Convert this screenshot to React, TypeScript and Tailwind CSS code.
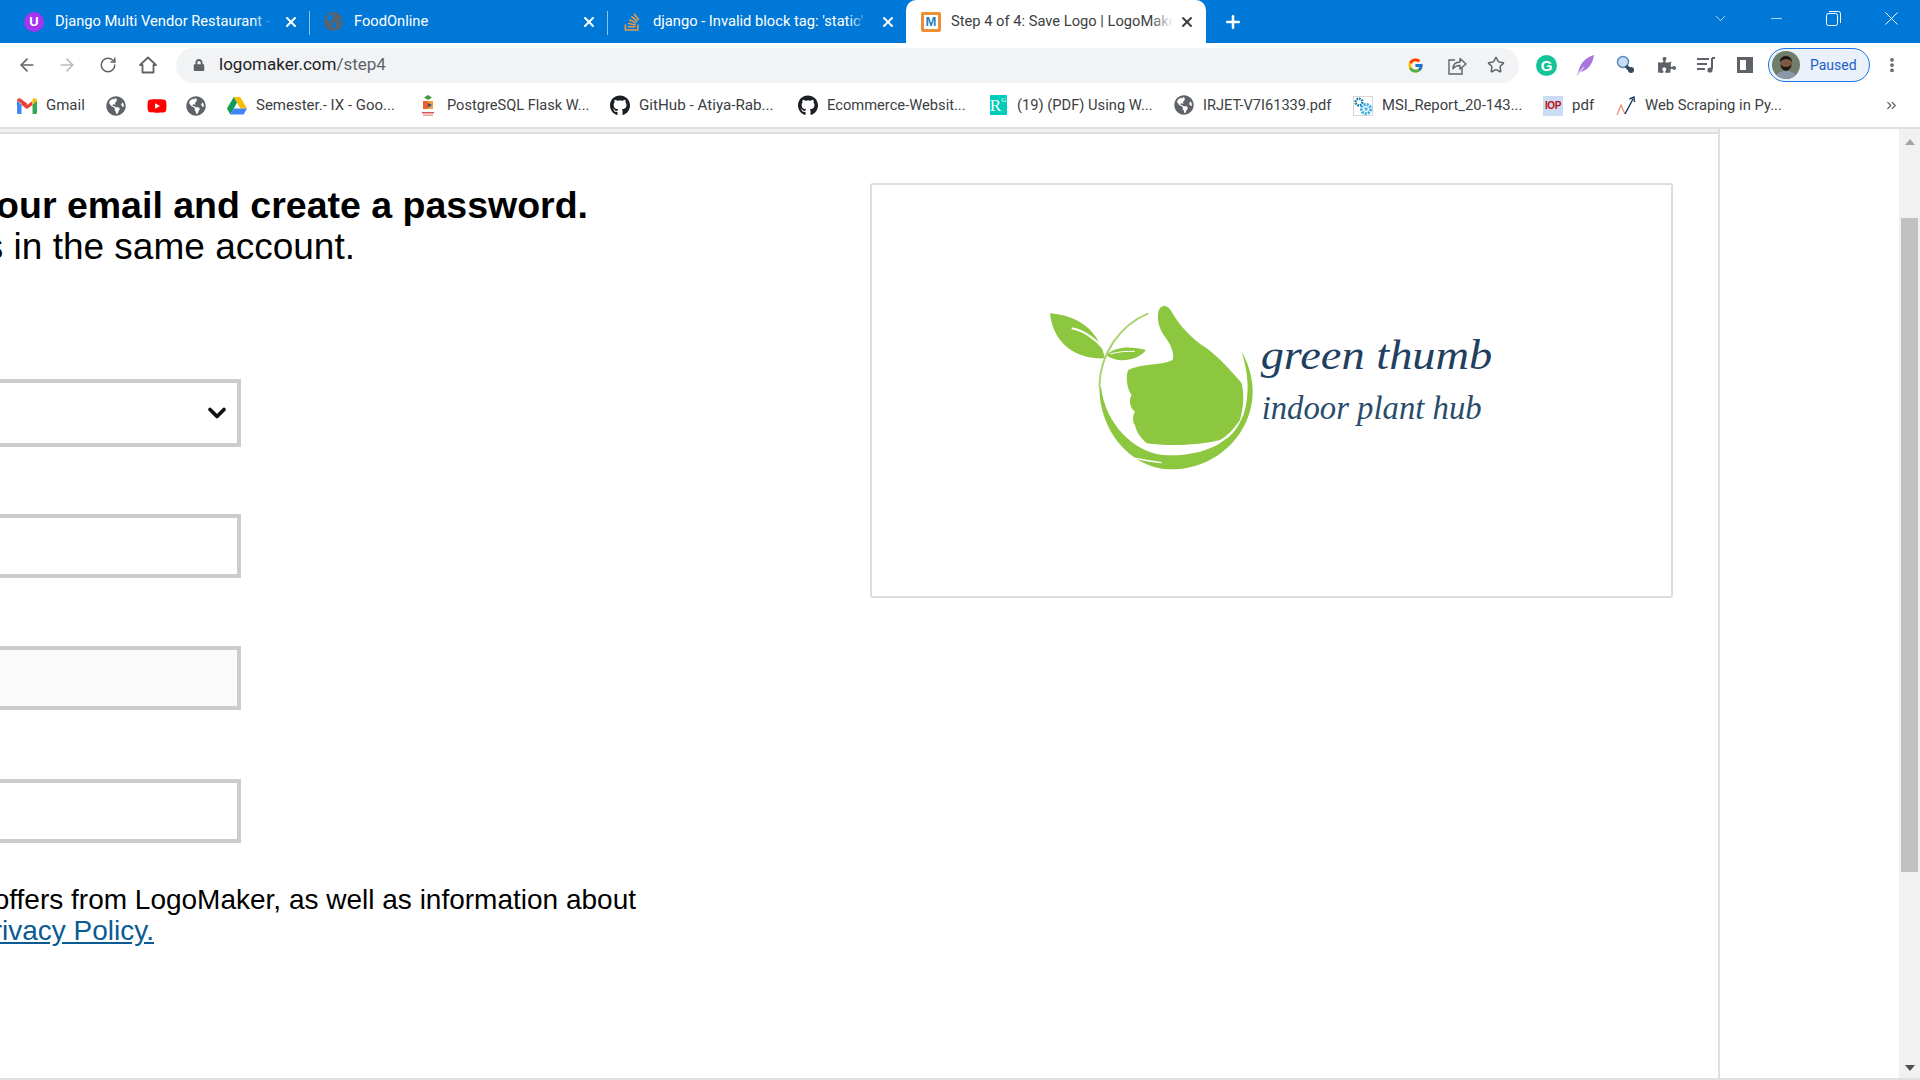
import React from "react";
import { FaGithub, FaGlobeAmericas, FaLock, FaPuzzlePiece, FaStackOverflow, FaYoutube } from "react-icons/fa";
import { FcGoogle } from "react-icons/fc";
import { ArrowLeft, ArrowRight, RotateCw, Star, X, Plus, ChevronDown, Minus, ChevronsRight, MoreVertical } from "lucide-react";

const Globe = ({ size = 20 }: { size?: number }) => <FaGlobeAmericas size={size} color="#5f6368" />;
const GitHub = () => <FaGithub size={21} color="#1b1f23" />;

const Gmail = () => (
  <svg width="20" height="16" viewBox="0 0 20 16">
    <path d="M0 2.5 V14.5 A1.5 1.5 0 0 0 1.5 16 H4.5 V6.5Z" fill="#4285f4" />
    <path d="M20 2.5 V14.5 A1.5 1.5 0 0 1 18.5 16 H15.5 V6.5Z" fill="#34a853" />
    <path d="M0 2.5 C0 .5 2 -.5 3.5 .6 L10 5.5 L10 9.5 L0 2.5Z" fill="#ea4335" />
    <path d="M4.5 3 L10 7 L15.5 3 V7 L10 11 L4.5 7Z" fill="#ea4335" />
    <path d="M20 2.5 C20 .5 18 -.5 16.5 .6 L15.5 1.4 V6.5Z" fill="#fbbc04" />
  </svg>
);

const Drive = () => (
  <svg width="20" height="18" viewBox="0 0 20 18">
    <path d="M6.7 0 H13.3 L20 11.6 H13.4Z" fill="#fbbc04" />
    <path d="M6.7 0 L0 11.6 L3.3 17.4 L10 5.8Z" fill="#0f9d58" />
    <path d="M3.3 17.4 H16.7 L20 11.6 H6.6Z" fill="#4285f4" />
  </svg>
);

const Postgres = () => (
  <svg width="14" height="22" viewBox="0 0 14 22">
    <path d="M7 0 L11 2.5 L7 5 L3 2.5Z" fill="#3f9d3f" />
    <path d="M2 6 H7 V14 H2Z" fill="#e8632b" />
    <path d="M7 6 H12 L12 14 H7Z" fill="#f29b38" />
    <path d="M7 8 L11 10 L7 12.5Z" fill="#334a8e" />
    <rect x="1" y="17" width="12" height="1.5" fill="#d9534f" />
    <rect x="2" y="19.5" width="10" height="1.5" fill="#e3a59a" />
  </svg>
);

const Msi = () => (
  <svg width="20" height="20" viewBox="0 0 20 20">
    <rect x=".5" y=".5" width="19" height="19" fill="#fff" stroke="#d5d5d5" />
    <circle cx="6" cy="6" r="3.4" fill="none" stroke="#1780a8" strokeWidth="2.4" strokeDasharray="1.8 .8" />
    <circle cx="13" cy="13" r="4.6" fill="none" stroke="#46b1e4" strokeWidth="3" strokeDasharray="2.2 .9" />
    <rect x="11.5" y="11.5" width="3" height="3" fill="#46b1e4" />
  </svg>
);

const Trend = () => (
  <svg width="20" height="20" viewBox="0 0 20 20" fill="none">
    <path d="M1 19 L5 9 L9 18" stroke="#e8846c" strokeWidth="1.1" />
    <path d="M9 18 L17 3" stroke="#14395e" strokeWidth="1.4" />
    <path d="M13.5 3 L18 1 L18.5 6" stroke="#14395e" strokeWidth="1.4" />
  </svg>
);

const Rg = () => (
  <span className="flex h-[20px] w-[17px] items-start justify-center rounded-[1px] bg-[#00ccbb] font-['Liberation_Serif',serif] text-[17px] leading-[21px] text-white">
    R<span className="text-[7px] leading-[10px]">G</span>
  </span>
);

const Iop = () => (
  <span className="flex h-[20px] w-[20px] items-center justify-center bg-[#ccdcf6] font-['Liberation_Sans',sans-serif] text-[10px] font-bold leading-none tracking-[-0.4px] text-[#bb1111]">
    IOP
  </span>
);

const LogoMakerIcon = () => (
  <span className="flex h-[20px] w-[20px] items-center justify-center rounded-[2px] border-[3px] border-[#ef8f34] bg-white font-['Liberation_Sans',sans-serif] text-[13px] font-bold leading-none text-[#1f7fc4]">
    M
  </span>
);

const UdemyIcon = () => (
  <span className="flex h-[20px] w-[20px] items-center justify-center rounded-full bg-[#a435f0] font-['Liberation_Sans',sans-serif] text-[13px] font-bold leading-none text-white">
    U
  </span>
);

const tabs = [
  { icon: <UdemyIcon />, title: "Django Multi Vendor Restaurant - Udemy", cls: "w-[298px] pl-[12px] pr-[11px]", sep: true, box: "w-[218px]", fade: true },
  { icon: <Globe size={19} />, title: "FoodOnline", cls: "w-[298px] pl-[13px] pr-[11px]", sep: true, box: "w-[228px]", fade: false },
  { icon: <FaStackOverflow size={20} color="#e89a4f" />, title: "django - Invalid block tag: 'static'", cls: "w-[298px] pl-[14px] pr-[10px]", sep: false, box: "w-[216px]", fade: true },
];

const bookmarks: { icon: React.ReactNode; text?: string; cls: string; size: string }[] = [
  { icon: <Gmail />, text: "Gmail", cls: "w-[89px]", size: "text-[15px]" },
  { icon: <Globe />, cls: "w-[41px]", size: "" },
  { icon: <FaYoutube size={22} color="#ff0000" />, cls: "w-[39px]", size: "" },
  { icon: <Globe />, cls: "w-[41px]", size: "" },
  { icon: <Drive />, text: "Semester.- IX - Goo...", cls: "w-[191px]", size: "text-[15px]" },
  { icon: <Postgres />, text: "PostgreSQL Flask W...", cls: "w-[192px]", size: "text-[14.6px]" },
  { icon: <GitHub />, text: "GitHub - Atiya-Rab...", cls: "w-[188px]", size: "text-[15.2px]" },
  { icon: <GitHub />, text: "Ecommerce-Websit...", cls: "w-[190px]", size: "text-[14.7px]" },
  { icon: <Rg />, text: "(19) (PDF) Using W...", cls: "w-[186px]", size: "text-[14.7px]" },
  { icon: <Globe />, text: "IRJET-V7I61339.pdf", cls: "w-[179px]", size: "text-[14.6px]" },
  { icon: <Msi />, text: "MSI_Report_20-143...", cls: "w-[190px]", size: "text-[14.8px]" },
  { icon: <Iop />, text: "pdf", cls: "w-[73px]", size: "text-[15px]" },
  { icon: <Trend />, text: "Web Scraping in Py...", cls: "w-[170px]", size: "text-[14.8px]" },
];

const Avatar = () => (
  <svg width="28" height="28" viewBox="0 0 28 28" className="rounded-full">
    <rect width="28" height="28" fill="#6f7d6a" />
    <path d="M3 28 C4 21 10 20 14 20 C19 20 24 21 25 28Z" fill="#8a97a8" />
    <ellipse cx="14" cy="12" rx="6" ry="7.5" fill="#7a5a45" />
    <path d="M8 11 C7 4 20 3 20 11 C18 7 11 7 8 11Z" fill="#17130f" />
    <path d="M8.5 13 C9 22 19 22 19.5 13 C18 17 10 17 8.5 13Z" fill="#211812" />
  </svg>
);

const Logo = () => (
  <svg width="490" height="200" viewBox="0 0 1470 600">
    <g fill="#8dc63f">
      <path d="M90 100 C150 105 230 130 255 235 C180 240 100 200 90 100Z" />
      <path d="M258 225 C290 195 340 200 378 210 C350 245 290 250 258 225Z" />
      <path d="M415 95 C420 75 440 70 455 95 C480 140 520 180 560 205 C600 235 640 280 665 310 C675 350 668 390 660 420 C640 450 620 470 600 480 C540 495 450 500 380 490 C365 475 350 460 345 435 C335 425 340 400 345 395 C330 385 325 360 335 345 C322 330 315 290 325 270 C360 250 420 258 458 240 C465 220 450 190 435 170 C420 150 410 125 415 95Z" />
      <path d="M238 320 C238 460 340 568 455 568 C590 568 700 460 698 330 C697 290 685 250 665 215 C685 280 690 340 672 400 C650 455 630 470 610 482 C570 515 490 530 430 525 C340 515 255 430 243 320Z" />
    </g>
    <path d="M335 533 C365 538 395 545 425 548" fill="none" stroke="#fff" strokeWidth="4" />
    <path d="M385 100 C300 135 240 220 238 320" fill="none" stroke="#a9d470" strokeWidth="6" />
    <path d="M155 145 C190 150 230 180 250 205" fill="none" stroke="#fff" strokeWidth="6" />
    <path d="M270 222 C295 215 320 213 345 214" fill="none" stroke="#fff" strokeWidth="3" />
    <text x="722" y="268" fontFamily="'Liberation Serif', serif" fontStyle="italic" fontSize="128" fill="#1f4060" textLength="695" lengthAdjust="spacingAndGlyphs">green thumb</text>
    <text x="725" y="418" fontFamily="'Liberation Serif', serif" fontStyle="italic" fontSize="100" fill="#2a4c6c" textLength="660" lengthAdjust="spacingAndGlyphs">indoor plant hub</text>
  </svg>
);

const tabFont = "font-['Roboto',sans-serif] text-[14.7px] leading-[20px]";

export default function App() {
  return (
    <div className="flex h-[1080px] w-[1920px] flex-col overflow-hidden bg-white font-['Liberation_Sans',sans-serif]">
      {/* Tab strip */}
      <div className="flex h-[43px] shrink-0 items-center bg-[#0078d7]">
        <div className="w-[12px] shrink-0" />
        <div className="flex h-[43px]">
          {tabs.map((t) => (
            <div key={t.title} className={`relative flex items-center ${t.cls} text-white`}>
              <span className="flex w-[20px] shrink-0 justify-center">{t.icon}</span>
              <span className="relative ml-[11px] flex-1 overflow-hidden">
                <span className={`relative block ${t.box} overflow-hidden whitespace-nowrap pb-[2px] ${tabFont}`}>
                  {t.title}
                  {t.fade && <span className="absolute right-0 top-0 h-full w-[20px] bg-gradient-to-r from-[#0078d7]/0 to-[#0078d7]" />}
                </span>
              </span>
              <X size={16} strokeWidth={3} className="ml-[6px] shrink-0" />
              {t.sep && <span className="absolute right-0 top-[11px] h-[24px] w-[1px] bg-[#8cc2ec]" />}
            </div>
          ))}
        </div>
        <div className="flex h-[43px] w-[300px] shrink-0 items-center self-end rounded-t-[10px] bg-white pl-[15px] pr-[11px] text-[#3c4043]">
          <LogoMakerIcon />
          <span className="relative ml-[10px] flex-1 overflow-hidden">
            <span className={`block overflow-hidden whitespace-nowrap pb-[2px] ${tabFont}`}>Step 4 of 4: Save Logo | LogoMaker</span>
            <span className="absolute right-0 top-0 h-full w-[22px] bg-gradient-to-r from-white/0 to-white" />
          </span>
          <X size={16} strokeWidth={3} className="ml-[6px] shrink-0 text-[#3c4043]" />
        </div>
        <Plus size={20} strokeWidth={3} className="ml-[17px] text-white" />
        <div className="flex-1" />
        <div className="flex items-center pb-[6px]">
          <ChevronDown size={17} strokeWidth={1} className="mr-[39px] text-white" />
          <Minus size={17} strokeWidth={1} className="mr-[41px] text-white" />
          <svg width="15" height="15" viewBox="0 0 15 15" fill="none" stroke="#fff" className="mr-[39px]">
            <rect x=".5" y="2.5" width="11" height="12" rx="2" />
            <path d="M3 .5 H12.5 A2 2 0 0 1 14.5 2.5 V12" />
          </svg>
          <X size={23} strokeWidth={1} className="mr-[17px] text-white" />
        </div>
      </div>

      {/* Toolbar */}
      <div className="flex h-[41px] shrink-0 items-center bg-white pt-[3px] text-[#5f6368]">
        <ArrowLeft size={20} className="ml-[17px]" strokeWidth={2} />
        <ArrowRight size={20} className="ml-[20px] text-[#b9bbbe]" strokeWidth={2} />
        <RotateCw size={18} className="ml-[22px]" strokeWidth={2} />
        <svg width="20" height="20" viewBox="0 0 20 20" fill="none" stroke="#5f6368" strokeWidth="1.8" className="ml-[21px]">
          <path d="M10 2.5 L2 10 H4.5 V17.5 H15.5 V10 H18Z" strokeLinejoin="round" />
        </svg>
        <div className="ml-[18px] flex h-[35px] w-[1343px] items-center rounded-full bg-[#f1f3f4] pl-[17px] pr-[11px]">
          <FaLock size={12} />
          <span className="ml-[14px] flex-1 font-['Roboto',sans-serif] text-[17px] text-[#202124]">
            logomaker.com<span className="text-[#5f6368]">/step4</span>
          </span>
          <FcGoogle size={17} className="mr-[23px]" />
          <svg width="20" height="19" viewBox="0 0 20 19" fill="none" stroke="#5f6368" strokeWidth="1.4" className="mr-[20px]">
            <path d="M8 4 H2 V18 H15 V12" />
            <path d="M6 13 C6 8 9 6 13 6 V2.5 L19 8 L13 13 V9.5 C10 9.5 7.5 10.5 6 13Z" strokeLinejoin="round" />
          </svg>
          <Star size={18} className="mr-[3px]" strokeWidth={2} />
        </div>
        <span className="ml-[17px] flex h-[21px] w-[21px] items-center justify-center rounded-full bg-[#15c39a] text-[15px] font-bold leading-none text-white">G</span>
        <svg width="20" height="22" viewBox="0 0 20 22" className="ml-[19px]">
          <path d="M2 20 C3 10 10 3 18 1 C17 9 12 17 4 18Z" fill="#a974dc" />
          <path d="M1 21 L8 13" stroke="#dcc6f1" strokeWidth="1.5" />
        </svg>
        <svg width="20" height="20" viewBox="0 0 20 20" className="ml-[20px]">
          <circle cx="7" cy="7" r="5.5" fill="#c6ddf3" stroke="#5a8cbd" strokeWidth="1.5" />
          <path d="M10 11 L15 16" stroke="#34495e" strokeWidth="3.5" />
          <circle cx="15" cy="15" r="3" fill="#34495e" />
        </svg>
        <FaPuzzlePiece size={18} className="ml-[22px]" />
        <svg width="18" height="16" viewBox="0 0 18 16" fill="none" stroke="#5f6368" strokeWidth="2" className="ml-[21px]">
          <path d="M0 2 H12 M0 7 H10 M0 12 H8" />
          <path d="M15 1 V12" />
          <circle cx="13" cy="13" r="1.6" fill="#5f6368" />
          <path d="M15 1 H18" />
        </svg>
        <span className="ml-[22px] h-[16px] w-[16px] border-[3px] border-r-[7px] border-[#5f6368] bg-white" />
        <div className="ml-[15px] flex h-[34px] w-[102px] items-center rounded-full border border-[#1a73e8] bg-[#eaf1fb] pl-[3px]">
          <Avatar />
          <span className="ml-[10px] font-['Roboto',sans-serif] text-[14px] text-[#1a5fc7]">Paused</span>
        </div>
        <MoreVertical size={18} strokeWidth={3} className="ml-[13px]" />
      </div>

      {/* Bookmarks */}
      <div className="flex h-[45px] shrink-0 items-center border-b-2 border-[#e0e0e0] bg-white pl-[17px]">
        {bookmarks.map((b, i) => (
          <div key={i} className={`flex shrink-0 items-center ${b.cls}`}>
            <span className="flex w-[20px] shrink-0 justify-center">{b.icon}</span>
            {b.text && <span className={`ml-[9px] whitespace-nowrap font-['Roboto',sans-serif] text-[#3c4043] ${b.size}`}>{b.text}</span>}
          </div>
        ))}
        <div className="flex-1" />
        <ChevronsRight size={15} className="mr-[21px] text-[#5f6368]" strokeWidth={2} />
      </div>

      {/* Page */}
      <div className="flex min-h-0 flex-1 border-b-2 border-[#e0e0e0]">
        <div className="flex w-[1899px] shrink-0">
          <div className="flex w-[1720px] shrink-0 flex-col border-r-2 border-[#e0e0e0]">
            <div className="h-[5px] shrink-0 border-b-2 border-[#e0e0e0] bg-[#f2f2f2]" />
            <div className="flex min-h-0 flex-1">
              <div className="w-[870px] shrink-0 overflow-hidden text-black">
                <div className="mt-[50px] flex w-[588px] justify-end whitespace-nowrap text-[37.5px] font-bold leading-[42px]">Enter your email and create a password.</div>
                <div className="flex w-[355px] justify-end whitespace-nowrap text-[37px] leading-[42px]">You can save all your logos in the same account.</div>
                <div className="mt-[111px] flex h-[68px] w-[241px] items-center justify-end border-y-4 border-r-4 border-[#cccccc] pr-[6px]">
                  <ChevronDown size={28} strokeWidth={3.2} className="text-[#111]" />
                </div>
                <div className="mt-[67px] h-[64px] w-[241px] border-y-4 border-r-4 border-[#cccccc]" />
                <div className="mt-[68px] h-[64px] w-[241px] border-y-4 border-r-4 border-[#cccccc] bg-[#fafafa]" />
                <div className="mt-[69px] h-[64px] w-[241px] border-y-4 border-r-4 border-[#cccccc]" />
                <div className="mt-[41px] flex w-[636px] justify-end whitespace-nowrap text-[28px] leading-[31px]">Sign up to receive emails and special offers from LogoMaker, as well as information about</div>
                <div className="flex w-[154px] justify-end whitespace-nowrap text-[28px] leading-[31px]">
                  <span>and&nbsp;</span>
                  <a className="text-[#0a5a94] underline">our Privacy Policy.</a>
                </div>
              </div>
              <div className="mt-[49px] h-[415px] w-[803px] shrink-0 rounded-[3px] border-2 border-[#dddddd] pl-[148px] pt-[95px]">
                <Logo />
              </div>
            </div>
          </div>
        </div>
        <div className="flex w-[21px] shrink-0 flex-col items-center bg-[#f1f1f1]">
          <svg width="10" height="6" viewBox="0 0 10 6" className="mt-[10px] shrink-0"><path d="M5 0 L10 6 H0Z" fill="#a3a3a3" /></svg>
          <div className="mt-[73px] h-[654px] w-[17px] shrink-0 bg-[#c1c1c1]" />
          <div className="flex-1" />
          <svg width="10" height="6" viewBox="0 0 10 6" className="mb-[7px] shrink-0"><path d="M5 6 L10 0 H0Z" fill="#505050" /></svg>
        </div>
      </div>
    </div>
  );
}
